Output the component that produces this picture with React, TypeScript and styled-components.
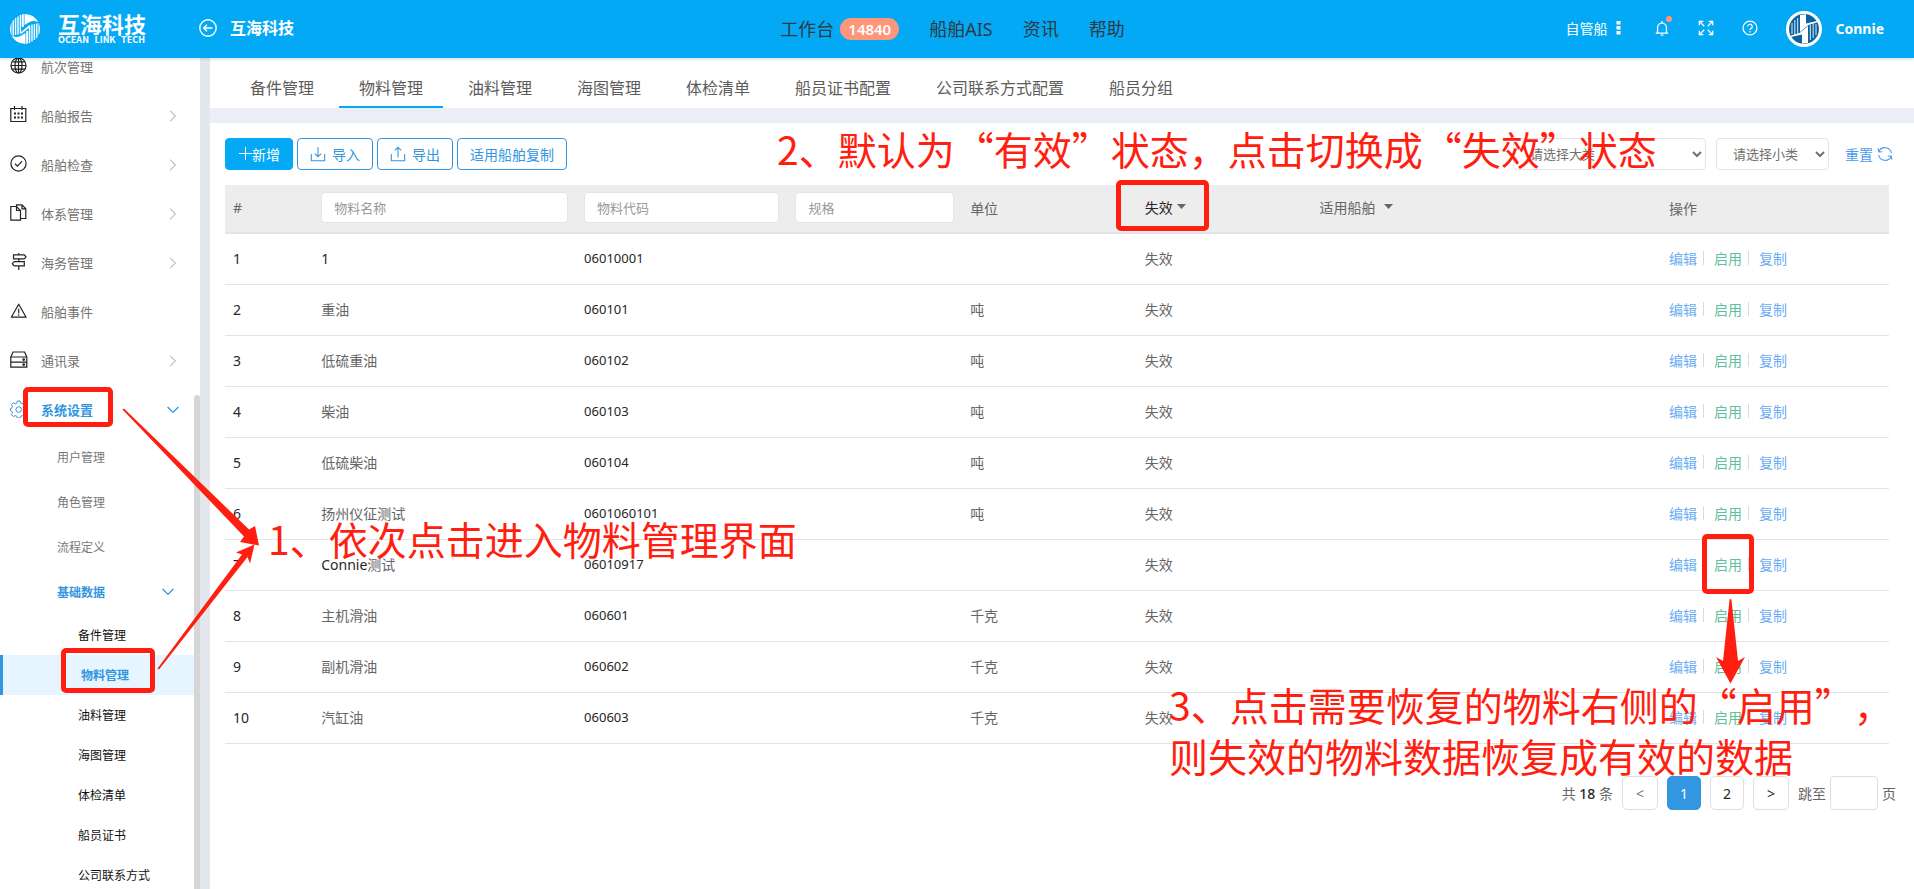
import React, { useId, useState } from "react";
import styled, { createGlobalStyle, css } from "styled-components";

const latin = '"Noto Sans", "Noto Sans CJK SC", sans-serif';
const cjk = '"Noto Sans CJK SC", "Noto Sans", sans-serif';

const color = {
  brand: "#04a9f5",
  blue: "#3296e1",
  line: "#e1e5e9",
  text: "#666",
  dark: "#262626",
  mark: "#ff1e10",
};

const GlobalStyle = createGlobalStyle`
  *, *::before, *::after { box-sizing: border-box; }
  html, body { margin: 0; padding: 0; }
  body {
    font-family: ${latin};
    font-size: 14px;
    color: ${color.text};
    background: #fff;
  }
  button, input, select { font-family: inherit; }
  button { cursor: pointer; }
  a { text-decoration: none; color: inherit; }
`;

const Shell = styled.div`
  position: relative;
  display: flex;
  flex-direction: column;
  height: 100vh;
  overflow: hidden;
`;

/* ---------- header ---------- */

const Header = styled.header`
  flex: none;
  display: grid;
  grid-template-columns: 1fr auto 1fr;
  align-items: center;
  height: 58px;
  padding: 0 19px 0 10px;
  background: ${color.brand};
  color: #fff;
  z-index: 1;
  box-shadow: 0 1px 3px rgba(0, 0, 0, 0.16);
`;

const Brand = styled.div`
  display: flex;
  align-items: center;
`;

const BrandText = styled.div`
  display: flex;
  flex-direction: column;
  width: 87px;
  margin: 0 54px 0 18px;
  font-family: ${cjk};
  font-weight: 700;
`;

const BrandName = styled.span`
  font-size: 22px;
  line-height: 22px;
  white-space: nowrap;
`;

const BrandSub = styled.span`
  display: flex;
  justify-content: space-between;
  font-size: 9px;
  line-height: 12px;
`;

const CompanyLink = styled.a`
  display: flex;
  align-items: center;
  gap: 13px;
  padding-bottom: 2px;
  font-size: 16px;
  line-height: 20px;
  font-weight: 700;
`;

const TopNav = styled.nav`
  display: flex;
  align-items: center;
  gap: 30px;
  font-size: 18px;
  line-height: 24px;
  color: #2c3a44;
`;

const TopNavLink = styled.a`
  display: flex;
  align-items: center;
  gap: 6px;
`;

const Badge = styled.span`
  padding: 0 8px;
  border-radius: 11px;
  background: #ff9579;
  color: #fff;
  font-size: 15px;
  line-height: 22px;
  font-weight: 600;
`;

const UserArea = styled.div`
  display: flex;
  align-items: center;
  justify-content: flex-end;
  padding-right: 11px;
`;

const Tools = styled.div`
  display: flex;
  align-items: center;
  padding-bottom: 2px;
`;

const FleetButton = styled.button`
  display: flex;
  align-items: center;
  gap: 8px;
  padding: 0;
  margin-right: 33px;
  border: 0;
  background: none;
  color: #fff;
  font-size: 14px;
`;

const IconButton = styled.button`
  position: relative;
  display: flex;
  width: 16px;
  height: 16px;
  padding: 0;
  margin-right: 28px;
  border: 0;
  background: none;
  color: #fff;
`;

const Dot = styled.span`
  position: absolute;
  top: -4px;
  right: -2px;
  width: 6px;
  height: 6px;
  border-radius: 50%;
  background: #ff9579;
`;

const Avatar = styled.span`
  display: flex;
  align-items: center;
  justify-content: center;
  width: 36px;
  height: 36px;
  margin-right: 14px;
  border-radius: 50%;
  background: #fff;
`;

const UserName = styled.span`
  padding-bottom: 2px;
  font-size: 14px;
  font-weight: 700;
`;

/* ---------- sidebar ---------- */

const Body = styled.div`
  flex: 1;
  display: flex;
  min-height: 0;
`;

const Sidebar = styled.aside`
  flex: none;
  display: flex;
  width: 200px;
  overflow: hidden;
`;

const Menu = styled.nav`
  flex: 1;
  margin-top: -15px;
`;

const ScrollTrack = styled.div`
  flex: none;
  display: flex;
  flex-direction: column;
  justify-content: flex-end;
  width: 6px;
`;

const ScrollThumb = styled.div`
  height: 59.5%;
  border-radius: 3px 3px 0 0;
  background: #d6d6d6;
`;

const levels = {
  1: css`
    height: 49px;
    padding: 0 15px 2px 10px;
    font-size: 13px;
    color: #737373;
  `,
  2: css`
    height: 45px;
    padding: 0 20px 2px 57px;
    font-size: 12px;
    color: #787878;
  `,
  3: css`
    height: 40px;
    padding: 0 0 0 78px;
    font-size: 12px;
    color: #111;
  `,
};

const MenuItem = styled.a<{ $level: 1 | 2 | 3; $open?: boolean; $current?: boolean }>`
  display: flex;
  align-items: center;
  ${(p) => levels[p.$level]}
  ${(p) =>
    (p.$open || p.$current) &&
    css`
      color: ${color.blue};
      font-weight: 700;
    `}
  ${(p) =>
    p.$current &&
    css`
      border-left: 3px solid ${color.blue};
      background: #e6f5ff;
    `}
`;

const MenuIcon = styled.span<{ $open?: boolean }>`
  display: flex;
  margin-right: 13px;
  padding-bottom: 2px;
  color: ${(p) => (p.$open ? color.blue : "#222")};
`;

const MenuLabel = styled.span`
  flex: 1;
`;

const Arrow = styled.span<{ $open?: boolean }>`
  display: flex;
  justify-content: center;
  width: 12px;
  color: ${(p) => (p.$open ? color.blue : "#c2c4c8")};
`;

/* ---------- main ---------- */

const Main = styled.main`
  flex: 1;
  display: flex;
  flex-direction: column;
  gap: 15px;
  min-width: 0;
  border-left: 10px solid #e4e8ee;
  background: #ebeff5;
`;

const Tabs = styled.nav`
  flex: none;
  display: flex;
  gap: 5px;
  height: 50px;
  padding-left: 20px;
  background: #fff;
`;

const Tab = styled.a<{ $active: boolean }>`
  display: flex;
  align-items: center;
  padding: 10px 20px 0;
  border-bottom: 2px solid ${(p) => (p.$active ? color.brand : "transparent")};
  font-size: 16px;
  color: #5c5c5c;
`;

const Card = styled.section`
  flex: 1;
  padding: 15px;
  background: #fff;
`;

const Toolbar = styled.div`
  display: flex;
  align-items: center;
  gap: 4px;
  padding-right: 6px;
  margin-bottom: 15px;
`;

const ToolButton = styled.button<{ $primary?: boolean }>`
  display: flex;
  align-items: center;
  justify-content: center;
  gap: ${(p) => (p.$primary ? 0 : 6)}px;
  height: 32px;
  padding: 0 12px;
  border: 1px solid ${(p) => (p.$primary ? color.brand : color.blue)};
  border-radius: 4px;
  background: ${(p) => (p.$primary ? color.brand : "#fff")};
  color: ${(p) => (p.$primary ? "#fff" : color.blue)};
  font-size: 14px;
`;

const Spacer = styled.div`
  flex: 1;
`;

const Select = styled.select<{ $wide?: boolean }>`
  width: ${(p) => (p.$wide ? 193 : 113)}px;
  height: 32px;
  margin-right: 6px;
  padding: 0 0 0 12px;
  border: 1px solid #e2e4e8;
  border-radius: 4px;
  background: #fff;
  color: #707070;
  font-size: 13px;
`;

const ResetButton = styled.button`
  display: flex;
  align-items: center;
  gap: 4px;
  margin-left: 6px;
  padding: 0;
  border: 0;
  background: none;
  color: #4c9cec;
  font-size: 14px;
`;

const TableWrap = styled.div`
  padding-right: 10px;
`;

const Table = styled.table`
  width: 100%;
  table-layout: fixed;
  border-collapse: separate;
  border-spacing: 0;
`;

const Th = styled.th<{ $width: string }>`
  width: ${(p) => p.$width};
  height: 49px;
  padding: 0 8px 2px;
  border-bottom: 2px solid ${color.line};
  background: #ededed;
  color: #666;
  font-size: 14px;
  font-weight: 400;
  text-align: left;
`;

const Td = styled.td<{ $dark?: boolean; $digits?: boolean }>`
  height: 51px;
  padding: 0 8px 2px;
  border-bottom: 1px solid ${color.line};
  color: ${(p) => (p.$dark || p.$digits ? color.dark : color.text)};
  font-size: ${(p) => (p.$digits ? 13 : 14)}px;
  white-space: nowrap;
`;

const Latin = styled.span`
  color: ${color.dark};
`;

const FilterInput = styled.input`
  display: block;
  width: 100%;
  height: 31px;
  padding: 0 12px;
  border: 1px solid #e2e5e9;
  border-radius: 4px;
  background: #fff;
  font-size: 13px;
  &::placeholder {
    color: #999;
  }
`;

const HeadButton = styled.button<{ $gap: number; $dark?: boolean }>`
  display: flex;
  align-items: center;
  gap: ${(p) => p.$gap}px;
  padding: 0 0 2px;
  border: 0;
  background: none;
  color: ${(p) => (p.$dark ? color.dark : "#666")};
  font-size: 14px;
`;

const Actions = styled.div`
  display: flex;
  align-items: center;
`;

const Action = styled.button<{ $green?: boolean }>`
  padding: 0;
  border: 0;
  background: none;
  color: ${(p) => (p.$green ? "#5fc09a" : "#6aadf3")};
  font-size: 14px;
`;

const Divider = styled.span`
  width: 1px;
  height: 14px;
  margin: 0 10px 0 6px;
  background: #d9dcdf;
`;

const Pager = styled.div`
  display: flex;
  align-items: center;
  justify-content: flex-end;
  gap: 9px;
  margin-top: 32px;
  padding-right: 3px;
  font-size: 14px;
`;

const Total = styled.span`
  color: ${color.text};
  strong {
    color: ${color.dark};
    font-weight: 500;
  }
`;

const PageButton = styled.button<{ $active?: boolean; $step?: boolean; $muted?: boolean }>`
  width: ${(p) => (p.$step ? 36 : 34)}px;
  height: 34px;
  padding: 0;
  border: 1px solid ${(p) => (p.$active ? color.blue : "#dcdee0")};
  border-radius: 5px;
  background: ${(p) => (p.$active ? color.blue : "#fff")};
  color: ${(p) => (p.$active ? "#fff" : p.$muted ? "#777" : color.dark)};
  font-size: 14px;
`;

const Jump = styled.label`
  display: flex;
  align-items: center;
  gap: 4px;
  color: ${color.text};
`;

const JumpInput = styled.input`
  width: 48px;
  height: 34px;
  border: 1px solid #dcdee0;
  border-radius: 4px;
`;

/* ---------- guide marks lying over the page ---------- */

const Guide = styled.div`
  position: absolute;
  top: 0;
  left: 0;
  z-index: 2;
  pointer-events: none;
  color: ${color.mark};
`;

const Frame = styled.div<{ $x: number; $y: number; $w: number; $h: number }>`
  position: absolute;
  left: ${(p) => p.$x}px;
  top: ${(p) => p.$y}px;
  width: ${(p) => p.$w}px;
  height: ${(p) => p.$h}px;
  border: 5px solid ${color.mark};
  border-radius: 5px;
`;

const Note = styled.p<{ $x: number; $y: number }>`
  position: absolute;
  left: ${(p) => p.$x}px;
  top: ${(p) => p.$y}px;
  margin: 0;
  font-family: ${cjk};
  font-size: 39px;
  line-height: 51px;
  white-space: nowrap;
  text-spacing-trim: space-all;
`;

const Pointers = styled.svg`
  position: absolute;
  top: 0;
  left: 0;
  fill: ${color.mark};
`;

/* ---------- icons ---------- */

const Svg = ({ size = 18, children }: { size?: number; children: React.ReactNode }) => (
  <svg
    width={size}
    height={size}
    viewBox="0 0 18 18"
    fill="none"
    stroke="currentColor"
    strokeWidth="1.2"
    aria-hidden="true"
  >
    {children}
  </svg>
);

const icons: Record<string, React.ReactNode> = {
  globe: (
    <>
      <circle cx="8.5" cy="8.5" r="7.5" />
      <ellipse cx="8.5" cy="8.5" rx="3.5" ry="7.5" />
      <path d="M8.5 1v15M1 8.5h15M2.3 4.8h12.4M2.3 12.2h12.4" />
    </>
  ),
  calendar: (
    <>
      <path d="M.8 2.5h15v13H.8zM4.5 0v4M12 0v4" />
      <path d="M4 7.5h2M7.5 7.5h2M11 7.5h2M4 11.5h2M7.5 11.5h2M11 11.5h2" strokeWidth="1.8" />
    </>
  ),
  check: (
    <>
      <circle cx="8.5" cy="8.5" r="7.6" />
      <path d="M5 8.8l2.5 2.4 4.6-5" />
    </>
  ),
  files: (
    <>
      <path d="M.8 2.5h5.7l4 4v9.7H.8zM6.5 2.5v4h4" />
      <path d="M6.5 2.5V.8H12l3.8 4v9.7h-5.3M12 .8v4h3.8" />
    </>
  ),
  signpost: (
    <>
      <path d="M3.5 1.8h10.8l1.7 2-1.7 2H3.5zM14.3 8.6H4.2l-1.9 2.1 1.9 2.2h10.1z" />
      <path d="M8.8 0v1.8M8.8 5.8v2.8M8.8 12.9V17" />
    </>
  ),
  warning: (
    <>
      <path d="M8.7 2.2l7.4 13H1.3z" strokeLinejoin="round" />
      <path d="M8.7 6.8v4.4M8.7 12.2v1.6" />
    </>
  ),
  server: (
    <>
      <path d="M.8 6h16v10.2H.8zM.8 6L3 1h11.6l2.2 5M.8 11.2h16" />
      <circle cx="13.7" cy="8.6" r=".8" />
      <circle cx="13.7" cy="13.6" r=".8" />
    </>
  ),
  gear: (
    <>
      <path
        d="M7.3 1h2.8l.5 2 1.6.7 1.8-1 2 2-1.1 1.8.7 1.600 2 .5v2.200l-2 .5-.7 1.600 1 1.800-1.900 2-1.800-1.100-1.600.7-.5 1.700H7.300l-.5-1.800-1.600-.6-1.800 1-2-2 1.100-1.700-.7-1.600-1.400-.5V8.600l1.500-.5.6-1.600-1-1.800 1.900-2 1.800 1.100 1.600-.7z"
        strokeWidth="1"
      />
      <circle cx="8.7" cy="9.6" r="2.8" strokeWidth="1" />
    </>
  ),
};

const Chevron = ({ down }: { down?: boolean }) =>
  down ? (
    <svg width="12" height="8" viewBox="0 0 12 8" fill="none" stroke="currentColor" strokeWidth="1.3" aria-hidden="true">
      <path d="M.6 1L6 6.4 11.4 1" />
    </svg>
  ) : (
    <svg width="8" height="12" viewBox="0 0 8 12" fill="none" stroke="currentColor" strokeWidth="1.3" aria-hidden="true">
      <path d="M1 .6L6.4 6 1 11.4" />
    </svg>
  );

const Caret = () => (
  <svg width="9" height="5" viewBox="0 0 9 5" fill="#666" aria-hidden="true">
    <path d="M0 0h9L4.500 5z" />
  </svg>
);

const LogoMark = () => {
  const id = useId();
  return (
    <svg width="30" height="30" viewBox="0 0 30 30" fill="#fff" stroke="#fff" strokeWidth="1.4" aria-hidden="true">
      <clipPath id={id}>
        <circle cx="15" cy="15" r="15" />
      </clipPath>
      <g clipPath={`url(#${id})`}>
        <path d="M.8 9v12M3.200 6v15.500M5.600 4v17M8 2.500v18M10.400 1v18" fill="none" />
        <path d="M29.200 21V9M26.800 24V9.500M24.400 26V10M22 27.500V10.500M19.600 29V11.500" fill="none" />
        <path d="M14.500 0C22 0 27.500 4 29 8.500c-3-1.500-6.500-2-9.500-.5L14.500 11z" stroke="none" />
        <path d="M15.500 30C8 30 2.500 26 1 21.500c3 1.500 6.500 2 9.500.5l5-3z" stroke="none" />
        <path d="M10.500 18.500L19.500 11v2.500l-9 7z" stroke="none" />
        <path d="M12.800 0v13" strokeWidth="2" />
        <path d="M17.200 30V17" strokeWidth="2" />
      </g>
    </svg>
  );
};

const AvatarMark = () => (
  <svg width="30" height="30" viewBox="0 0 30 30" fill="#fff" aria-hidden="true">
    <circle cx="15" cy="15" r="15" fill="#0b62a0" />
    <path d="M3 9v11M5.800 6v15M8.600 4v16" stroke="#b9d3e6" strokeWidth="1.200" />
    <path d="M27 21V10M24.200 24V9.500M21.400 26V11" stroke="#b9d3e6" strokeWidth="1.200" />
    <path d="M11 1l6-.8v9.300L28 7v1.500L19.500 11 11 18z" />
    <path d="M19 29l-6 .8v-9.300L2 23v-1.500L10.500 19 19 12z" />
  </svg>
);

/* ---------- data ---------- */

type Entry = { label: string; level: 1 | 2 | 3; icon?: string; arrow?: boolean; open?: boolean; current?: boolean };

const menu: Entry[] = [
  { label: "航次管理", level: 1, icon: "globe" },
  { label: "船舶报告", level: 1, icon: "calendar", arrow: true },
  { label: "船舶检查", level: 1, icon: "check", arrow: true },
  { label: "体系管理", level: 1, icon: "files", arrow: true },
  { label: "海务管理", level: 1, icon: "signpost", arrow: true },
  { label: "船舶事件", level: 1, icon: "warning" },
  { label: "通讯录", level: 1, icon: "server", arrow: true },
  { label: "系统设置", level: 1, icon: "gear", arrow: true, open: true },
  { label: "用户管理", level: 2 },
  { label: "角色管理", level: 2 },
  { label: "流程定义", level: 2 },
  { label: "基础数据", level: 2, arrow: true, open: true },
  { label: "备件管理", level: 3 },
  { label: "物料管理", level: 3, current: true },
  { label: "油料管理", level: 3 },
  { label: "海图管理", level: 3 },
  { label: "体检清单", level: 3 },
  { label: "船员证书", level: 3 },
  { label: "公司联系方式", level: 3 },
];

const tabs = ["备件管理", "物料管理", "油料管理", "海图管理", "体检清单", "船员证书配置", "公司联系方式配置", "船员分组"];

const rows: { latin?: string; name?: string; code: string; unit: string }[] = [
  { latin: "1", code: "06010001", unit: "" },
  { name: "重油", code: "060101", unit: "吨" },
  { name: "低硫重油", code: "060102", unit: "吨" },
  { name: "柴油", code: "060103", unit: "吨" },
  { name: "低硫柴油", code: "060104", unit: "吨" },
  { name: "扬州仪征测试", code: "0601060101", unit: "吨" },
  { latin: "Connie", name: "测试", code: "06010917", unit: "" },
  { name: "主机滑油", code: "060601", unit: "千克" },
  { name: "副机滑油", code: "060602", unit: "千克" },
  { name: "汽缸油", code: "060603", unit: "千克" },
];

export default function App() {
  const [tab, setTab] = useState("物料管理");

  return (
    <Shell>
      <GlobalStyle />
      <Header>
        <Brand>
          <LogoMark />
          <BrandText>
            <BrandName>互海科技</BrandName>
            <BrandSub>
              <span>OCEAN</span> <span>LINK</span> <span>TECH</span>
            </BrandSub>
          </BrandText>
          <CompanyLink href="#">
            <Svg>
              <circle cx="9" cy="9" r="8.200" strokeWidth="1.400" />
              <path d="M13.500 9H5M8 5.800L4.800 9 8 12.200" strokeWidth="1.500" />
            </Svg>
            互海科技
          </CompanyLink>
        </Brand>
        <TopNav>
          <TopNavLink href="#">
            工作台<Badge>14840</Badge>
          </TopNavLink>
          <TopNavLink href="#">船舶AIS</TopNavLink>
          <TopNavLink href="#">资讯</TopNavLink>
          <TopNavLink href="#">帮助</TopNavLink>
        </TopNav>
        <UserArea>
          <Tools>
            <FleetButton type="button">
              自管船
              <svg width="5" height="14" viewBox="0 0 5 14" fill="currentColor" aria-hidden="true">
                <path d="M.5 0h4v3.500h-4zM.5 5h4v3.500h-4zM.5 10h4v3.500h-4z" />
              </svg>
            </FleetButton>
            <IconButton type="button" aria-label="通知">
              <Svg size={16}>
                <path d="M2 14.800h14M4 14.500V8.500a5 5 0 0 1 10 0v6M9 3.300V1M7.500 17h3" strokeWidth="1.500" />
              </Svg>
              <Dot />
            </IconButton>
            <IconButton type="button" aria-label="全屏">
              <Svg size={16}>
                <path
                  d="M1.500 6V1.500H6M1.500 1.500L7 7M12 1.500h4.500V6M16.500 1.500L11 7M1.500 12v4.500H6M1.500 16.500L7 11M12 16.500h4.500V12M16.500 16.500L11 11"
                  strokeWidth="1.500"
                />
              </Svg>
            </IconButton>
            <IconButton type="button" aria-label="帮助中心">
              <Svg size={16}>
                <circle cx="9" cy="9" r="7.800" strokeWidth="1.400" />
                <path d="M6.500 7.300a2.500 2.500 0 1 1 3.600 2.200c-.8.400-1.100.8-1.100 1.700M9 12.300V14" strokeWidth="1.400" />
              </Svg>
            </IconButton>
          </Tools>
          <Avatar>
            <AvatarMark />
          </Avatar>
          <UserName>Connie</UserName>
        </UserArea>
      </Header>

      <Body>
        <Sidebar>
          <Menu>
            {menu.map((m) => (
              <MenuItem key={m.level + m.label} href="#" $level={m.level} $open={m.open} $current={m.current}>
                {m.icon && (
                  <MenuIcon $open={m.open}>
                    <Svg>{icons[m.icon]}</Svg>
                  </MenuIcon>
                )}
                <MenuLabel>{m.label}</MenuLabel>
                {m.arrow && (
                  <Arrow $open={m.open}>
                    <Chevron down={m.open} />
                  </Arrow>
                )}
              </MenuItem>
            ))}
          </Menu>
          <ScrollTrack>
            <ScrollThumb />
          </ScrollTrack>
        </Sidebar>

        <Main>
          <Tabs>
            {tabs.map((t) => (
              <Tab key={t} href="#" $active={t === tab} onClick={() => setTab(t)}>
                {t}
              </Tab>
            ))}
          </Tabs>

          <Card>
            <Toolbar>
              <ToolButton type="button" $primary>
                <svg width="14" height="14" viewBox="0 0 14 14" stroke="currentColor" aria-hidden="true">
                  <path d="M7.500 0v13M1 6.500h13" />
                </svg>
                新增
              </ToolButton>
              <ToolButton type="button">
                <Svg size={16}>
                  <path d="M1.500 9v7.500h15V9M9 1v11M5.500 8.500L9 12l3.500-3.500" />
                </Svg>
                导入
              </ToolButton>
              <ToolButton type="button">
                <Svg size={16}>
                  <path d="M1.500 9v7.500h15V9M9 13V1.500M5.500 5L9 1.500 12.500 5" />
                </Svg>
                导出
              </ToolButton>
              <ToolButton type="button">适用船舶复制</ToolButton>
              <Spacer />
              <Select $wide aria-label="大类">
                <option>请选择大类</option>
              </Select>
              <Select aria-label="小类">
                <option>请选择小类</option>
              </Select>
              <ResetButton type="button">
                重置
                <Svg size={16}>
                  <path d="M2 6.500a7.500 7.500 0 0 1 14.300 1.500M16 11.500A7.500 7.500 0 0 1 1.700 10M1.200 2.500L2 6.800l4-.3M16.800 15.500l-.8-4.300-4 .3" />
                </Svg>
              </ResetButton>
            </Toolbar>

            <TableWrap>
              <Table>
                <thead>
                  <tr>
                    <Th $width="5.3%">#</Th>
                    <Th $width="15.8%">
                      <FilterInput placeholder="物料名称" aria-label="物料名称" />
                    </Th>
                    <Th $width="12.7%">
                      <FilterInput placeholder="物料代码" aria-label="物料代码" />
                    </Th>
                    <Th $width="10.5%">
                      <FilterInput placeholder="规格" aria-label="规格" />
                    </Th>
                    <Th $width="10.5%">单位</Th>
                    <Th $width="10.5%">
                      <HeadButton type="button" $gap={4} $dark>
                        失效
                        <Caret />
                      </HeadButton>
                    </Th>
                    <Th $width="21%">
                      <HeadButton type="button" $gap={8}>
                        适用船舶
                        <Caret />
                      </HeadButton>
                    </Th>
                    <Th $width="13.7%">操作</Th>
                  </tr>
                </thead>
                <tbody>
                  {rows.map((r, i) => (
                    <tr key={r.code}>
                      <Td $dark>{i + 1}</Td>
                      <Td>
                        {r.latin && <Latin>{r.latin}</Latin>}
                        {r.name}
                      </Td>
                      <Td $digits>{r.code}</Td>
                      <Td />
                      <Td>{r.unit}</Td>
                      <Td>失效</Td>
                      <Td />
                      <Td>
                        <Actions>
                          <Action type="button">编辑</Action>
                          <Divider />
                          <Action type="button" $green>
                            启用
                          </Action>
                          <Divider />
                          <Action type="button">复制</Action>
                        </Actions>
                      </Td>
                    </tr>
                  ))}
                </tbody>
              </Table>
            </TableWrap>

            <Pager>
              <Total>
                共 <strong>18</strong> 条
              </Total>
              <PageButton type="button" $step $muted>
                &lt;
              </PageButton>
              <PageButton type="button" $active>
                1
              </PageButton>
              <PageButton type="button">2</PageButton>
              <PageButton type="button" $step>
                &gt;
              </PageButton>
              <Jump>
                跳至
                <JumpInput type="text" />
                页
              </Jump>
            </Pager>
          </Card>
        </Main>
      </Body>

      <Guide>
        <Pointers width="1760" height="700" viewBox="0 0 1760 700" aria-hidden="true">
          <path d="M122.500 409.500l1.500-1L249 529.500l6-3.500 4 19.500-19-3.500 4-5.500z" />
          <path d="M157.500 668.500l1.500 1L247.500 557l2.500 6.500 4.500-19-18.500 8 6 2z" />
          <path d="M1729.500 600q1-2 2 0l6.500 61 7-4-14.500 26.500L1716 657l7 4z" />
        </Pointers>
        <Frame $x={23} $y={387} $w={90} $h={40} />
        <Frame $x={61} $y={648} $w={94} $h={45} />
        <Frame $x={1116} $y={180} $w={93} $h={51} />
        <Frame $x={1702} $y={534} $w={52} $h={60} />
        <Note $x={268} $y={513}>1、依次点击进入物料管理界面</Note>
        <Note $x={777} $y={123}>2、默认为“有效”状态，点击切换成“失效”状态</Note>
        <Note $x={1169} $y={679}>
          3、点击需要恢复的物料右侧的“启用”，
          <br />
          则失效的物料数据恢复成有效的数据
        </Note>
      </Guide>
    </Shell>
  );
}
